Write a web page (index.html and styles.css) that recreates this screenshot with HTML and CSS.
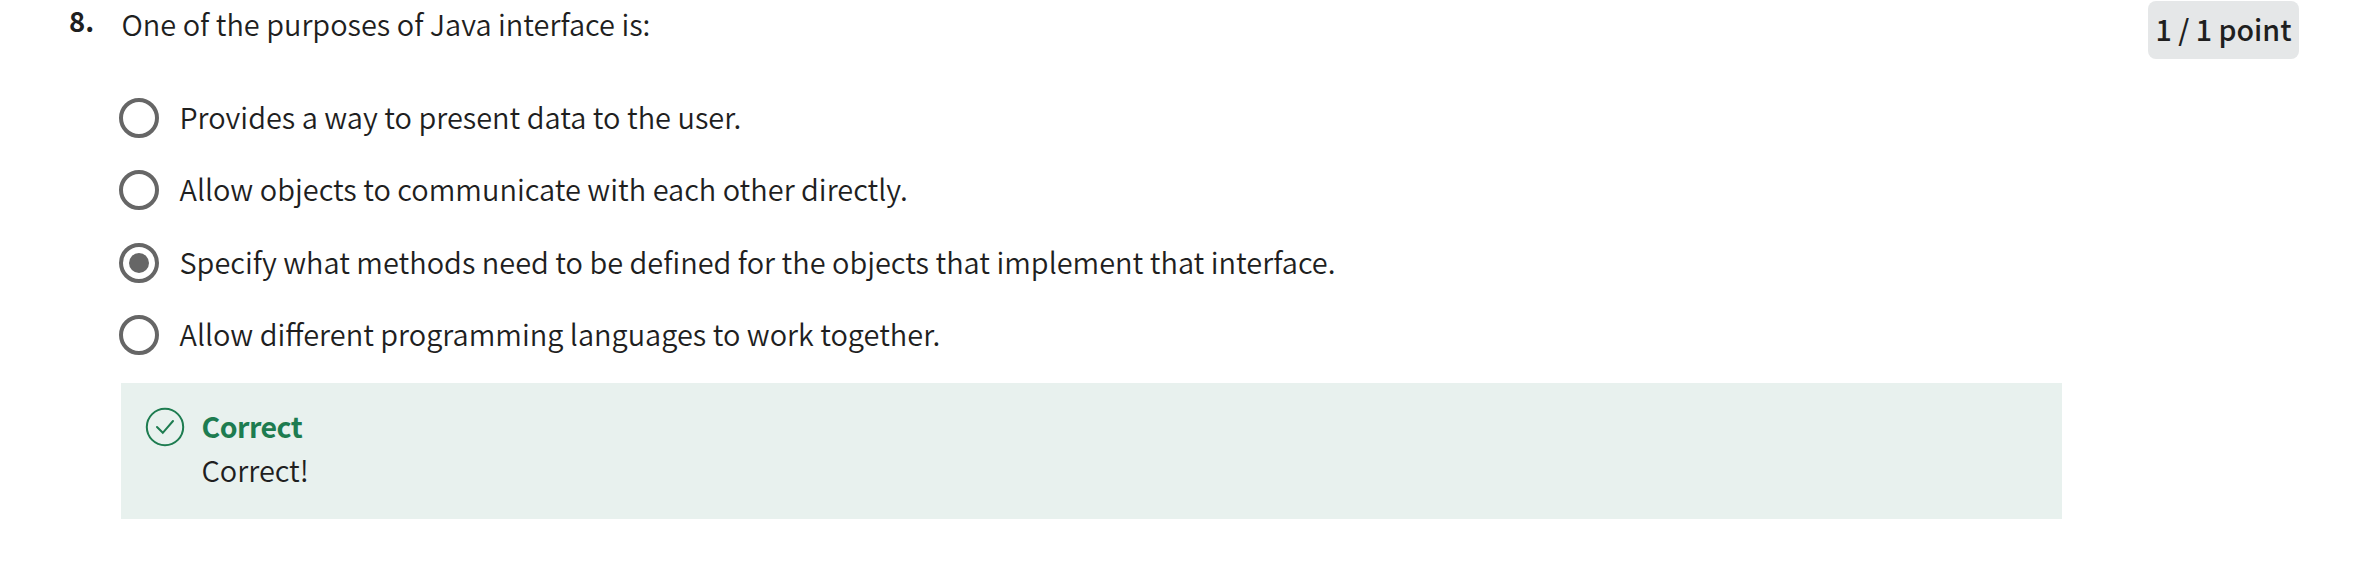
FILE: index.html
```html
<!DOCTYPE html>
<html lang="en">
<head>
<meta charset="utf-8">
<title>Quiz question</title>
<link rel="stylesheet" href="styles.css">
</head>
<body>
<main class="question">
  <div class="number">8.</div>
  <section class="content">
    <p class="prompt">One of the purposes of Java interface is:</p>
    <ul class="options">
      <li class="option"><span class="radio"></span><span class="label">Provides a way to present data to the user.</span></li>
      <li class="option"><span class="radio"></span><span class="label">Allow objects to communicate with each other directly.</span></li>
      <li class="option"><span class="radio checked"></span><span class="label">Specify what methods need to be defined for the objects that implement that interface.</span></li>
      <li class="option"><span class="radio"></span><span class="label">Allow different programming languages to work together.</span></li>
    </ul>
    <div class="feedback">
      <svg class="check" viewBox="0 0 40 40" fill="none" stroke="#1d7c50" stroke-width="2" stroke-linecap="round"><circle cx="20" cy="20" r="18.2"/><path d="M12 20l5.8 5.8L28 14"/></svg>
      <div class="message"><strong class="verdict">Correct</strong><p class="note">Correct!</p></div>
    </div>
  </section>
  <div class="points">1 / 1 point</div>
</main>
</body>
</html>
```
FILE: styles.css
```css
* { box-sizing: border-box; }
body { margin: 0; background: #fff; color: #1f1f1f; font-family: "Noto Sans CJK SC", sans-serif; font-weight: 350; font-size: 28.95px; line-height: 44px; }
p, ul { margin: 0; padding: 0; }
.question { display: flex; align-items: flex-start; padding-left: 69px; }
.number { width: 52px; margin-top: -2px; font-weight: 600; font-size: 27.5px; }
.content { width: 1941px; padding-top: 1px; }
.prompt { padding-left: 0.5px; }
.options { list-style: none; padding-top: 37px; }
.option { display: flex; align-items: center; height: 72.3px; }
.radio { width: 40px; height: 40px; margin-left: -2px; border: 4px solid #666; border-radius: 50%; display: flex; align-items: center; justify-content: center; }
.checked::after { content: ""; width: 20px; height: 20px; border-radius: 50%; background: #666; }
.label { margin-left: 20.5px; margin-top: -4px; }
.feedback { display: flex; height: 136px; margin-top: 12px; padding: 22px 24px; background: #e8f1ee; }
.check { width: 40px; height: 40px; margin-top: 2px; }
.message { margin-left: 16.5px; margin-top: -1px; }
.verdict { display: block; color: #1d7c50; font-weight: 600; font-size: 28.5px; letter-spacing: -0.5px; }
.note { margin-top: -1px; }
.points { margin-top: 1px; margin-left: 86px; width: 151px; height: 58px; line-height: 56px; border-radius: 8px; background: #e5e7e8; text-align: center; font-weight: 500; font-size: 28.6px; }
```
